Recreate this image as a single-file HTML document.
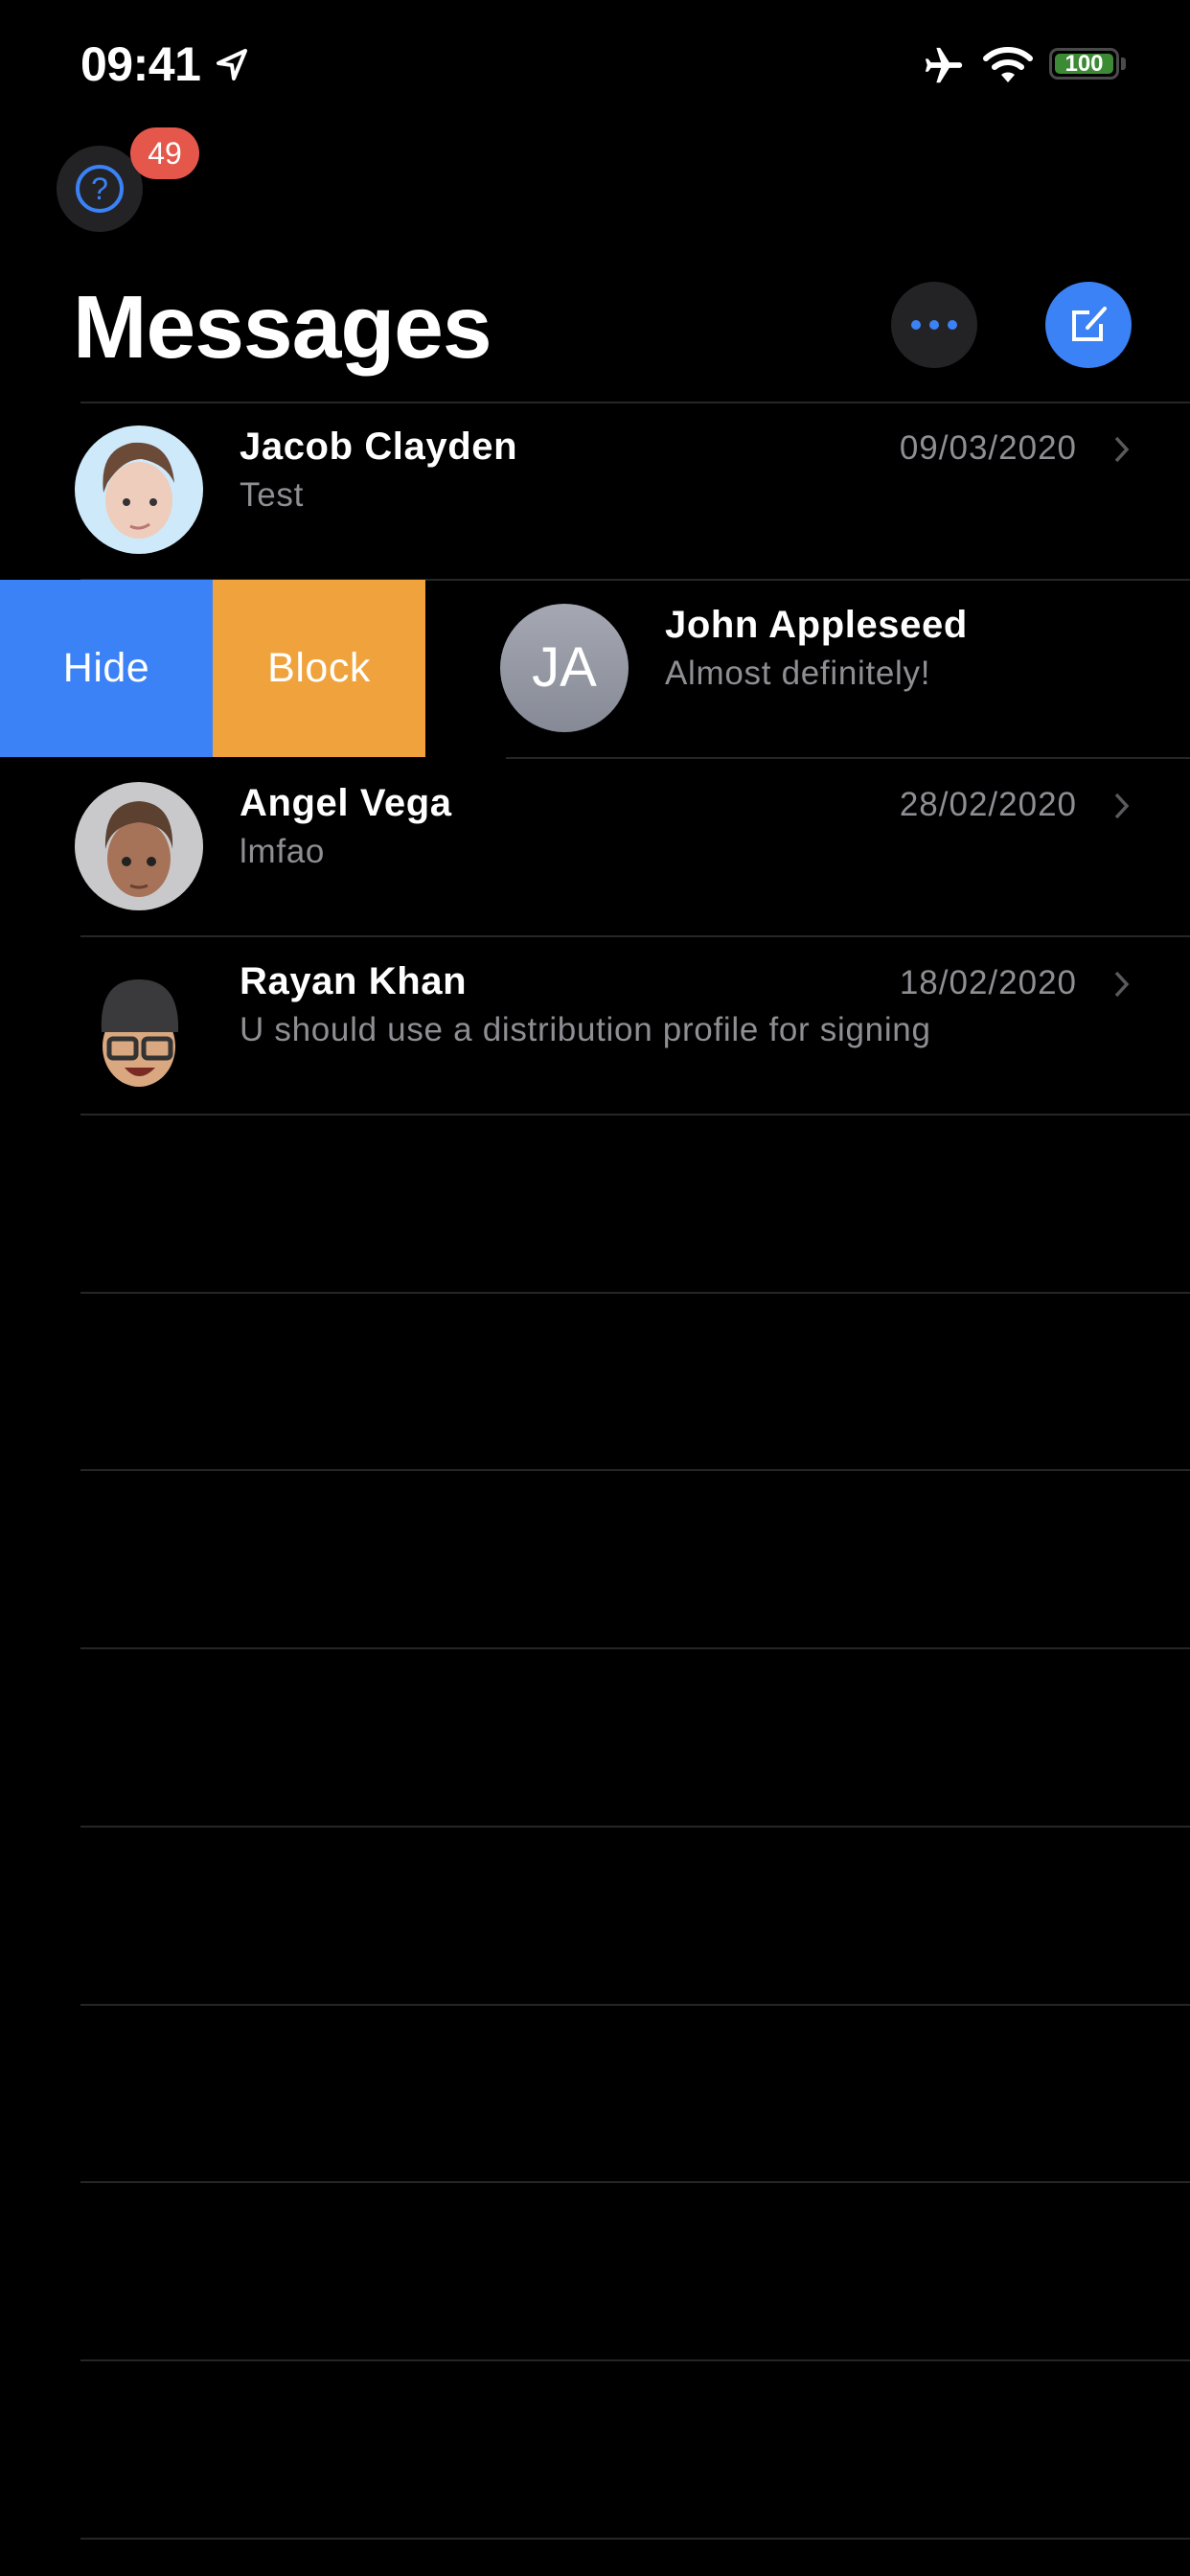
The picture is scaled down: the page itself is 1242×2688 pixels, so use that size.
<!DOCTYPE html>
<html><head><meta charset="utf-8">
<style>
*{margin:0;padding:0;box-sizing:border-box}
html,body{width:1242px;height:2688px;background:#000;overflow:hidden;font-family:"Liberation Sans",sans-serif;color:#fff}
.abs{position:absolute}
.sep{position:absolute;left:84px;right:0;height:2px;background:#262628}
.name{position:absolute;font-size:40px;font-weight:bold;letter-spacing:0.6px}
.msg{position:absolute;font-size:35px;color:#8e8e93;letter-spacing:0.7px}
.date{position:absolute;right:118px;font-size:35px;color:#8e8e93;text-align:right;letter-spacing:1px}
.chev{position:absolute;left:1162px}
</style></head><body>
<!-- status bar -->
<div class="abs" style="left:84px;top:38px;font-size:50px;font-weight:bold;letter-spacing:-0.5px">09:41</div>
<svg class="abs" style="left:224px;top:50px" width="36" height="36" viewBox="0 0 36 36"><path d="M32 3 L4 16 L18 18 L20 32 Z" fill="none" stroke="#fff" stroke-width="4" stroke-linejoin="round"/></svg>
<svg class="abs" style="left:962px;top:46px" width="46" height="46" viewBox="0 0 24 24"><path d="M21 16v-2l-8-5V3.5C13 2.7 12.3 2 11.5 2S10 2.7 10 3.5V9l-8 5v2l8-2.5V19l-2 1.5V22l3.5-1 3.5 1v-1.5L13 19v-5.5z" fill="#fff" transform="rotate(90 12 12)"/></svg>
<svg class="abs" style="left:1026px;top:46px" width="52" height="42" viewBox="0 0 52 42"><path d="M3 15 A34 34 0 0 1 49 15" fill="none" stroke="#fff" stroke-width="6" stroke-linecap="round"/><path d="M12 24 A22 22 0 0 1 40 24" fill="none" stroke="#fff" stroke-width="6" stroke-linecap="round"/><path d="M19 32 L26 40 L33 32 A11 11 0 0 0 19 32Z" fill="#fff"/></svg>
<div class="abs" style="left:1095px;top:50px;width:73px;height:33px;border:3px solid #4a4a4a;border-radius:9px;padding:3px">
<div style="width:100%;height:100%;background:#3d8a34;border-radius:5px;font-size:24px;font-weight:bold;text-align:center;line-height:21px">100</div></div>
<div class="abs" style="left:1170px;top:60px;width:5px;height:13px;background:#4a4a4a;border-radius:0 3px 3px 0"></div>
<!-- help -->
<div class="abs" style="left:59px;top:152px;width:90px;height:90px;border-radius:50%;background:#232325"></div>
<div class="abs" style="left:79px;top:172px;width:50px;height:50px;border-radius:50%;border:4px solid #3b82f6;color:#3b82f6;font-size:32px;text-align:center;line-height:42px">?</div>
<div class="abs" style="left:136px;top:133px;width:72px;height:54px;border-radius:27px;background:#e5574a;font-size:32px;text-align:center;line-height:54px">49</div>
<!-- title -->
<div class="abs" style="left:76px;top:288px;font-size:93px;font-weight:bold;letter-spacing:-1px">Messages</div>
<div class="abs" style="left:930px;top:294px;width:90px;height:90px;border-radius:50%;background:#232325"></div>
<div class="abs" style="left:951px;top:334px;width:10px;height:10px;border-radius:50%;background:#3b82f6"></div>
<div class="abs" style="left:970px;top:334px;width:10px;height:10px;border-radius:50%;background:#3b82f6"></div>
<div class="abs" style="left:989px;top:334px;width:10px;height:10px;border-radius:50%;background:#3b82f6"></div>
<div class="abs" style="left:1091px;top:294px;width:90px;height:90px;border-radius:50%;background:#3b82f6"></div>
<svg class="abs" style="left:1111px;top:314px" width="50" height="50" viewBox="0 0 50 50"><path d="M26 12 H10 V40 H38 V24" fill="none" stroke="#fff" stroke-width="4"/><path d="M42 8 L24 28" stroke="#fff" stroke-width="4" stroke-linecap="round"/></svg>
<!-- separators -->
<div class="sep" style="top:419px"></div>
<div class="sep" style="top:604px"></div>
<div class="sep" style="top:790px;left:528px"></div>
<div class="sep" style="top:976px"></div>
<div class="sep" style="top:1162px"></div>
<div class="sep" style="top:1348px"></div>
<div class="sep" style="top:1533px"></div>
<div class="sep" style="top:1719px"></div>
<div class="sep" style="top:1905px"></div>
<div class="sep" style="top:2091px"></div>
<div class="sep" style="top:2276px"></div>
<div class="sep" style="top:2462px"></div>
<div class="sep" style="top:2648px"></div>
<!-- row 1 -->
<svg class="abs" style="left:78px;top:444px" width="134" height="134" viewBox="0 0 134 134"><circle cx="67" cy="67" r="67" fill="#cde9fa"/><ellipse cx="67" cy="78" rx="35" ry="40" fill="#eecdbc"/><path d="M30 70 Q25 25 60 18 Q100 15 104 60 Q95 40 70 35 Q50 35 34 60Z" fill="#6b4a38"/><circle cx="54" cy="80" r="4" fill="#333"/><circle cx="82" cy="80" r="4" fill="#333"/><path d="M58 105 Q68 110 78 103" stroke="#b77" stroke-width="3" fill="none"/></svg>
<div class="name" style="left:250px;top:444px">Jacob Clayden</div>
<div class="msg" style="left:250px;top:497px">Test</div>
<div class="date" style="top:448px">09/03/2020</div>
<svg class="chev" style="top:454px" width="18" height="30" viewBox="0 0 18 30"><path d="M3 3 L14 15 L3 27" stroke="#5a5a5e" stroke-width="3.5" fill="none"/></svg>
<!-- row 2 -->
<div class="abs" style="left:0;top:605px;width:222px;height:185px;background:#3b82f6;font-size:43px;text-align:center;line-height:185px;letter-spacing:0.5px">Hide</div>
<div class="abs" style="left:222px;top:605px;width:222px;height:185px;background:#f0a33c;font-size:43px;text-align:center;line-height:185px;letter-spacing:0.5px">Block</div>
<div class="abs" style="left:522px;top:630px;width:134px;height:134px;border-radius:50%;background:linear-gradient(#a5a8b2,#868a96);font-size:58px;text-align:center;line-height:134px">JA</div>
<div class="name" style="left:694px;top:630px">John Appleseed</div>
<div class="msg" style="left:694px;top:683px">Almost definitely!</div>
<!-- row 3 -->
<svg class="abs" style="left:78px;top:816px" width="134" height="134" viewBox="0 0 134 134"><circle cx="67" cy="67" r="67" fill="#c9c9cc"/><ellipse cx="67" cy="80" rx="33" ry="40" fill="#a67358"/><path d="M32 70 Q30 22 67 20 Q104 22 102 70 Q98 45 67 42 Q38 45 32 70Z" fill="#5c4030"/><circle cx="54" cy="83" r="5" fill="#222"/><circle cx="80" cy="83" r="5" fill="#222"/><path d="M58 108 Q67 112 76 108" stroke="#6b4030" stroke-width="3" fill="none"/></svg>
<div class="name" style="left:250px;top:816px">Angel Vega</div>
<div class="msg" style="left:250px;top:869px">lmfao</div>
<div class="date" style="top:820px">28/02/2020</div>
<svg class="chev" style="top:826px" width="18" height="30" viewBox="0 0 18 30"><path d="M3 3 L14 15 L3 27" stroke="#5a5a5e" stroke-width="3.5" fill="none"/></svg>
<!-- row 4 -->
<svg class="abs" style="left:78px;top:1002px" width="134" height="134" viewBox="0 0 134 134"><ellipse cx="67" cy="90" rx="38" ry="42" fill="#d9a780"/><path d="M28 75 Q25 20 67 20 Q110 20 108 75 Z" fill="#3a3a3c"/><rect x="36" y="82" width="28" height="20" rx="4" fill="none" stroke="#333" stroke-width="5"/><rect x="72" y="82" width="28" height="20" rx="4" fill="none" stroke="#333" stroke-width="5"/><path d="M52 112 Q67 130 84 112 Z" fill="#7a2a25"/></svg>
<div class="name" style="left:250px;top:1002px">Rayan Khan</div>
<div class="msg" style="left:250px;top:1055px">U should use a distribution profile for signing</div>
<div class="date" style="top:1006px">18/02/2020</div>
<svg class="chev" style="top:1012px" width="18" height="30" viewBox="0 0 18 30"><path d="M3 3 L14 15 L3 27" stroke="#5a5a5e" stroke-width="3.5" fill="none"/></svg>
</body></html>
